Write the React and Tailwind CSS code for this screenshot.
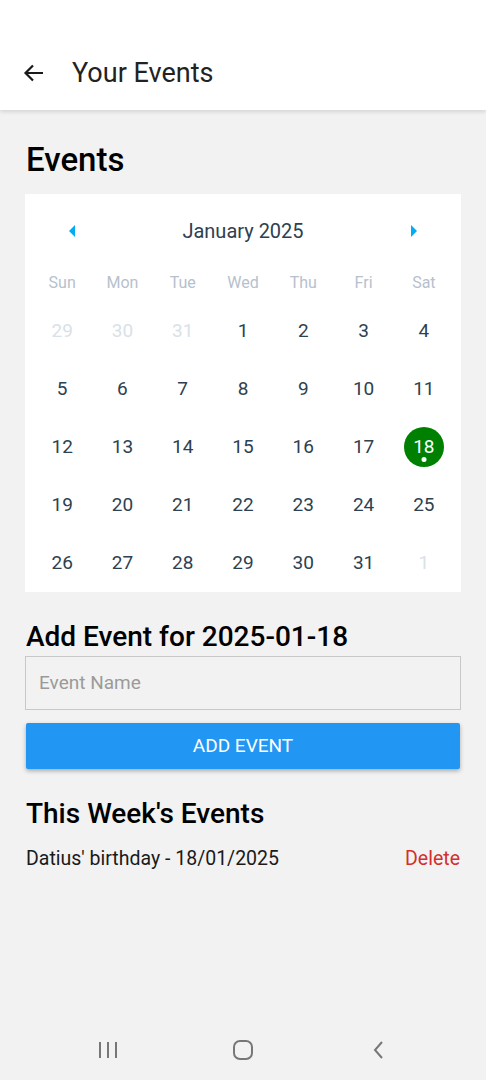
import React from 'react';

const weeks = [
    [29, 30, 31, 1, 2, 3, 4],
    [5, 6, 7, 8, 9, 10, 11],
    [12, 13, 14, 15, 16, 17, 18],
    [19, 20, 21, 22, 23, 24, 25],
    [26, 27, 28, 29, 30, 31, 1],
];
const dayNames = ['Sun', 'Mon', 'Tue', 'Wed', 'Thu', 'Fri', 'Sat'];

const Calendar = () => (
    <div className="bg-white mx-[25px] px-[2px] pt-[25px] pb-[0px]">
        <div className="flex items-center justify-between px-[40px] h-[24px]">
            <svg width="10" height="14" viewBox="0 0 10 14"><path d="M8 1 L2 7 L8 13 Z" fill="#00adf5" /></svg>
            <span className="text-[20px] text-[#2d4150]">January 2025</span>
            <svg width="10" height="14" viewBox="0 0 10 14"><path d="M2 1 L8 7 L2 13 Z" fill="#00adf5" /></svg>
        </div>
        <div className="grid grid-cols-7 mt-[29px] px-[5px]">
            {dayNames.map((d) => (
                <div key={d} className="text-center text-[16px] text-[#b6c1cd] leading-[22px]">{d}</div>
            ))}
        </div>
        <div className="flex flex-col mt-[8px] px-[5px]">
            {weeks.map((week, wi) => (
                <div key={wi} className="grid grid-cols-7 h-[58px] items-center">
                    {week.map((d, di) => {
                        const outside = (wi === 0 && d > 20) || (wi === 4 && d < 10);
                        const selected = wi === 2 && d === 18;
                        if (selected) {
                            return (
                                <div key={di} className="flex justify-center">
                                    <div className="relative w-[40px] h-[40px] rounded-full bg-[#008000] flex items-center justify-center">
                                        <span className="text-[19px] text-white">{d}</span>
                                        <span className="absolute bottom-[5px] left-1/2 -translate-x-1/2 w-[5px] h-[5px] rounded-full bg-white" />
                                    </div>
                                </div>
                            );
                        }
                        return (
                            <div key={di} className={`text-center text-[19px] ${outside ? 'text-[#d9e1e8]' : 'text-[#2d4150]'}`}>{d}</div>
                        );
                    })}
                </div>
            ))}
        </div>
    </div>
);

export default function App() {
    return (
        <div className="w-[486px] h-[1080px] bg-[#f2f2f2] flex flex-col" style={{ fontFamily: 'Roboto, "Noto Sans", sans-serif' }}>
            <div className="bg-white h-[110px] pt-[46px] shadow-[0_2px_4px_rgba(0,0,0,0.12)] relative z-10">
                <div className="flex items-center h-[54px] px-[22px]">
                    <svg width="24" height="24" viewBox="0 0 24 24" fill="none" stroke="#1a1a1a" strokeWidth="2.2">
                        <path d="M21 12 H3.5 M11 4.5 L3.5 12 L11 19.5" />
                    </svg>
                    <span className="ml-[26px] text-[27px] text-[#222]">Your Events</span>
                </div>
            </div>

            <h1 className="mx-[26px] mt-[32px] mb-[16px] text-[33px] leading-[36px] font-medium text-black">Events</h1>

            <Calendar />

            <h2 className="mx-[26px] mt-[28px] text-[28px] leading-[34px] font-medium text-black">Add Event for 2025-01-18</h2>
            <div className="mx-[25px] mt-[2px] h-[54px] border border-[#c8c8c8] flex items-center px-[13px]">
                <span className="text-[19px] text-[#9a9a9a]">Event Name</span>
            </div>
            <button className="mx-[26px] mt-[13px] h-[46px] bg-[#2196f3] text-white text-[19px] rounded-[2px] shadow-[0_2px_4px_rgba(0,0,0,0.3)]">
                ADD EVENT
            </button>

            <h2 className="mx-[26px] mt-[28px] text-[28px] leading-[34px] font-medium text-black">This Week's Events</h2>
            <div className="mx-[26px] mt-[16px] flex items-center justify-between leading-[24px]">
                <span className="text-[19.5px] text-[#1a1a1a]">Datius' birthday - 18/01/2025</span>
                <span className="text-[19.5px] text-[#d32f2f]">Delete</span>
            </div>

            <div className="mt-auto h-[60px] flex items-center justify-center gap-[95px] pb-[0px]">
                <div className="w-[40px] flex justify-center">
                    <svg width="22" height="20" viewBox="0 0 22 20" fill="none" stroke="#777" strokeWidth="2">
                        <path d="M3 2 V18 M11 2 V18 M19 2 V18" />
                    </svg>
                </div>
                <div className="w-[40px] flex justify-center">
                    <svg width="22" height="22" viewBox="0 0 22 22" fill="none" stroke="#777" strokeWidth="2">
                        <rect x="2" y="2" width="18" height="18" rx="6" />
                    </svg>
                </div>
                <div className="w-[40px] flex justify-center">
                    <svg width="14" height="22" viewBox="0 0 14 22" fill="none" stroke="#777" strokeWidth="2">
                        <path d="M11 3 L4 11 L11 19" />
                    </svg>
                </div>
            </div>
        </div>
    );
}
